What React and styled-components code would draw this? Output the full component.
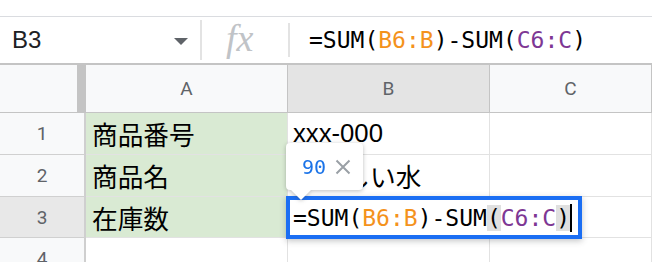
import styled, { createGlobalStyle } from "styled-components";

const GlobalStyle = createGlobalStyle`
  html, body {
    margin: 0;
    padding: 0;
    background: #fff;
  }
`;

const Page = styled.div`
  width: 652px;
  height: 262px;
  overflow: hidden;
  padding-top: 16px;
  box-sizing: border-box;
  font-family: "Liberation Sans", "Noto Sans CJK JP", sans-serif;
`;

const FormulaBar = styled.div`
  display: flex;
  align-items: center;
  height: 46px;
  border-top: 1px solid #dadce0;
  border-bottom: 2px solid #c4c4c4;
`;

const NameBox = styled.div`
  display: flex;
  align-items: center;
  justify-content: space-between;
  width: 188px;
  padding-left: 12px;
  box-sizing: border-box;
  font-size: 24px;
  color: #202124;
`;

const Caret = styled.span`
  width: 0;
  height: 0;
  border-left: 7.5px solid transparent;
  border-right: 7.5px solid transparent;
  border-top: 7px solid #5f6368;
  margin-top: 2px;
`;

const Divider = styled.span`
  flex: none;
  width: 2px;
  height: ${(p) => p.$h}px;
  background: #e3e3e3;
  margin-left: ${(p) => p.$ml}px;
`;

const Fx = styled.span`
  flex: none;
  width: 62px;
  margin-left: 24px;
  font-family: "Liberation Serif", serif;
  font-style: italic;
  font-size: 38px;
  color: #c0c3c7;
  line-height: 1;
  margin-top: -4px;
`;

const Formula = styled.span`
  font-family: "DejaVu Sans Mono", monospace;
  font-size: 23px;
  color: #000;
  margin-left: 19px;
  white-space: pre;
`;

const Ref = styled.span`
  color: ${(p) => p.$color};
`;

const Paren = styled.span`
  background: ${(p) => (p.$match ? "#e0e0e0" : "transparent")};
`;

const Grid = styled.div`
  display: grid;
  grid-template-columns: 86px 202px 202px 1fr;
  grid-template-rows: 48px 42px 42px 41px 42px;
`;

const Corner = styled.div`
  background: #f8f9fa;
  border-right: 9px solid #c4c4c4;
  border-bottom: 1px solid #c4c4c4;
`;

const ColHead = styled.div`
  display: flex;
  align-items: center;
  justify-content: center;
  background: ${(p) => (p.$active ? "#e4e4e4" : "#f8f9fa")};
  border-right: 1px solid #c4c4c4;
  border-bottom: 1px solid #c4c4c4;
  font-family: "Roboto", "Liberation Sans", sans-serif;
  font-size: 19px;
  color: #5f6368;
`;

const RowHead = styled.div`
  display: flex;
  align-items: center;
  justify-content: center;
  background: ${(p) => (p.$active ? "#e8e8e8" : "#f8f9fa")};
  border-right: 2px solid #cfcfcf;
  border-bottom: 1px solid #d0d0d0;
  font-family: "Roboto", "Liberation Sans", sans-serif;
  font-size: 19px;
  color: #5f6368;
  overflow: hidden;
`;

const Cell = styled.div`
  position: relative;
  display: flex;
  align-items: center;
  padding-left: ${(p) => (p.$col === "A" ? 6 : 5)}px;
  background: ${(p) => (p.$fill ? "#d9ead3" : "#fff")};
  border-right: 1px solid #e2e2e2;
  border-bottom: 1px solid #e2e2e2;
  font-size: 25.7px;
  color: #000;
  white-space: nowrap;
`;

const Editor = styled.div`
  position: absolute;
  left: -2px;
  top: -1px;
  width: 296px;
  height: 43px;
  box-sizing: border-box;
  border: 4px solid #1b6ef3;
  background: #fff;
  box-shadow: 0 2px 6px rgba(60, 64, 67, 0.3);
  display: flex;
  align-items: center;
  padding-left: 3px;
  z-index: 2;
  font-family: "DejaVu Sans Mono", monospace;
  font-size: 23px;
  white-space: pre;
`;

const Cursor = styled.span`
  display: inline-block;
  width: 2px;
  height: 28px;
  background: #000;
  vertical-align: middle;
`;

const Tooltip = styled.div`
  position: absolute;
  left: -2px;
  top: -54px;
  width: 77px;
  height: 47px;
  background: #fff;
  border-radius: 4px;
  filter: drop-shadow(0 1px 2px rgba(60, 64, 67, 0.35));
  display: flex;
  align-items: center;
  padding-left: 16px;
  box-sizing: border-box;
  gap: 9px;
  z-index: 3;

  &::after {
    content: "";
    position: absolute;
    left: 4px;
    bottom: -10px;
    border-left: 11px solid transparent;
    border-right: 11px solid transparent;
    border-top: 11px solid #fff;
  }
`;

const TipValue = styled.span`
  font-family: "DejaVu Sans Mono", monospace;
  font-size: 20px;
  color: #1a73e8;
`;

const Close = () => (
  <svg width="16" height="16" viewBox="0 0 16 16">
    <path d="M1.5 1.5 L14.5 14.5 M14.5 1.5 L1.5 14.5" stroke="#9aa0a6" strokeWidth="2" />
  </svg>
);

const FormulaText = ({ matchParens }) => (
  <>
    =SUM(<Ref $color="#f4921c">B6:B</Ref>)-SUM
    <Paren $match={matchParens}>(</Paren>
    <Ref $color="#7e3794">C6:C</Ref>
    <Paren $match={matchParens}>)</Paren>
  </>
);

const rows = [
  { n: 1, a: "商品番号", b: "xxx-000" },
  { n: 2, a: "商品名", b: "おいしい水" },
  { n: 3, a: "在庫数", b: null },
  { n: 4, a: "", b: "" },
];

export default function App() {
  return (
    <>
      <GlobalStyle />
      <Page>
        <FormulaBar>
          <NameBox>
            B3
            <Caret />
          </NameBox>
          <Divider $h={40} $ml={12} />
          <Fx>fx</Fx>
          <Divider $h={34} $ml={0} />
          <Formula>
            <FormulaText />
          </Formula>
        </FormulaBar>
        <Grid>
          <Corner />
          <ColHead>A</ColHead>
          <ColHead $active>B</ColHead>
          <ColHead>C</ColHead>
          {rows.map((r) => (
            <RowGroup key={r.n} row={r} />
          ))}
        </Grid>
      </Page>
    </>
  );
}

function RowGroup({ row }) {
  const active = row.n === 3;
  return (
    <>
      <RowHead $active={active}>{row.n}</RowHead>
      <Cell $col="A" $fill={row.n <= 3}>
        {row.a}
      </Cell>
      <Cell $col="B">
        {active ? (
          <>
            <Tooltip>
              <TipValue>90</TipValue>
              <Close />
            </Tooltip>
            <Editor>
              <FormulaText matchParens />
              <Cursor />
            </Editor>
          </>
        ) : (
          row.b
        )}
      </Cell>
      <Cell $col="C" />
    </>
  );
}
